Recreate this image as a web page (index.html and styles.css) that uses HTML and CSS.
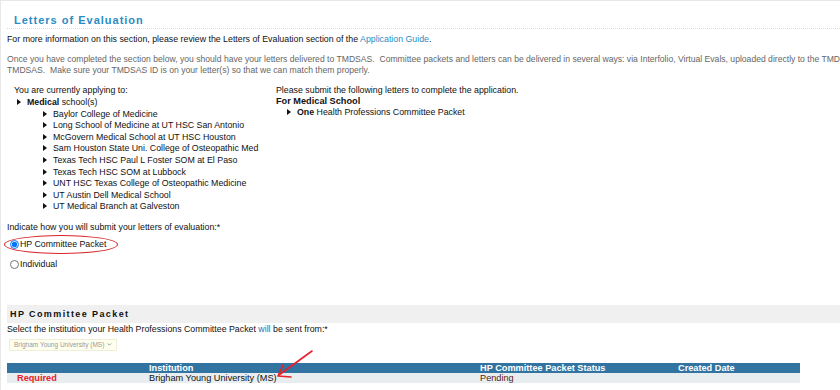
FILE: index.html
```html
<!DOCTYPE html>
<html lang="en">
<head>
  <meta charset="UTF-8">
  <title>Letters of Evaluation</title>
  <link rel="stylesheet" href="styles.css">
</head>
<body>
  <div id="page">
    <h2 class="title">Letters of Evaluation</h2>
    <p class="info">For more information on this section, please review the Letters of Evaluation section of the <a href="#">Application Guide</a>.</p>
    <p class="note">Once you have completed the section below, you should have your letters delivered to TMDSAS.&nbsp; Committee packets and letters can be delivered in several ways: via Interfolio, Virtual Evals, uploaded directly to the TMDSAS portal, or mailed to<br>TMDSAS.&nbsp; Make sure your TMDSAS ID is on your letter(s) so that we can match them properly.</p>

    <div class="cols">
      <div class="col-left">
        <div>You are currently applying to:</div>
        <ul class="tri top">
          <li><b>Medical</b> school(s)
            <ul class="tri sub">
              <li>Baylor College of Medicine</li>
              <li>Long School of Medicine at UT HSC San Antonio</li>
              <li>McGovern Medical School at UT HSC Houston</li>
              <li>Sam Houston State Uni. College of Osteopathic Med</li>
              <li>Texas Tech HSC Paul L Foster SOM at El Paso</li>
              <li>Texas Tech HSC SOM at Lubbock</li>
              <li>UNT HSC Texas College of Osteopathic Medicine</li>
              <li>UT Austin Dell Medical School</li>
              <li>UT Medical Branch at Galveston</li>
            </ul>
          </li>
        </ul>
      </div>
      <div class="col-right">
        <div>Please submit the following letters to complete the application.</div>
        <div class="for"><b>For Medical School</b></div>
        <ul class="tri req">
          <li><b>One</b> Health Professions Committee Packet</li>
        </ul>
      </div>
    </div>

    <div class="method">
      <div>Indicate how you will submit your letters of evaluation:*</div>
      <label class="opt circled"><input type="radio" name="m" checked> HP Committee Packet</label>
      <label class="opt second"><input type="radio" name="m"> Individual</label>
    </div>

    <h3 class="band">HP Committee Packet</h3>
    <div class="select-label">Select the institution your Health Professions Committee Packet <span class="will">will</span> be sent from:*</div>
    <div class="fake-select">Brigham Young University (MS) <svg class="chev" width="7" height="5" viewBox="0 0 7 5"><path d="M1 1 L3.5 3.5 L6 1" stroke="#888" stroke-width="1.2" fill="none"/></svg></div>

    <div class="table-wrap">
      <table class="packets">
        <tr>
          <th class="c1"></th>
          <th class="c2">Institution</th>
          <th class="c3">HP Committee Packet Status</th>
          <th class="c4">Created Date</th>
        </tr>
        <tr>
          <td class="c1 required">Required</td>
          <td class="c2">Brigham Young University (MS)</td>
          <td class="c3 pending">Pending</td>
          <td class="c4"></td>
        </tr>
      </table>
      <svg class="arrow" width="50" height="34" viewBox="0 0 50 34">
        <path d="M43 2 L10 26" stroke="#e8202a" stroke-width="1.6" fill="none" stroke-linecap="round"/>
        <path d="M14 16 L9 27 L22 28" stroke="#e8202a" stroke-width="1.6" fill="none" stroke-linecap="round" stroke-linejoin="round"/>
      </svg>
    </div>
  </div>
</body>
</html>
```

FILE: styles.css
```css
body { margin: 0; font-family: Arial, "Liberation Sans", sans-serif; font-size: 8.8px; line-height: 11px; color: #111; background: #fff; }
#page { border-top: 1px solid #e8e8e8; border-left: 1px solid #e8e8e8; padding: 0 0 0 6px; height: 389px; overflow: hidden; }
.title { margin: 0; padding: 13px 0 1px 7px; font-size: 11px; line-height: 13px; letter-spacing: 1px; color: #2b8cc4; border-bottom: 1px dotted #e2dcc6; }
.info { margin: 5px 0 0 0; }
.info a { color: #2b8cc4; text-decoration: none; }
.note { margin: 9px 0 0 0; color: #666; font-size: 8.6px; line-height: 10.5px; white-space: nowrap; }

.cols { display: flex; margin-top: 10px; }
.col-left { width: 262px; padding-left: 7px; }
.for { font-size: 9.2px; line-height: 10px; }

ul.tri { list-style: none; margin: 0; padding: 0; }
ul.tri li { position: relative; padding-left: 13px; line-height: 11.6px; }
ul.tri li::before { content: ""; position: absolute; left: 3px; top: 2px; border-left: 4px solid #111; border-top: 3px solid transparent; border-bottom: 3px solid transparent; }
ul.tri.top { margin-top: 1px; }
ul.tri.sub { padding-left: 13px; }
ul.tri.req { padding-left: 8px; margin-top: 1px; }

.method { margin-top: 9px; }
.opt { display: flex; align-items: center; gap: 1px; width: fit-content; height: 13px; }
.opt input { margin: 0 0 0 3px; width: 9px; height: 9px; }
.circled { position: relative; margin-top: 5px; }
.circled::after { content: ""; position: absolute; left: -3px; top: -3px; width: 112px; height: 17px; border: 1.5px solid #d9262a; border-radius: 50%; }
.second { margin-top: 7px; }

.band { margin: 34px 0 0 0; padding: 0 3px; height: 18px; line-height: 19px; background: #f0f0f0; font-size: 9px; letter-spacing: 1.4px; color: #111; }
.select-label { margin-top: 1px; }
.will { color: #2b6cb0; }
.fake-select { display: flex; align-items: center; gap: 3px; margin: 4px 0 0 2px; width: 98px; height: 10px; padding: 0 4px; font-size: 6.5px; color: #999; background: #fffff0; border: 1px solid #efefd8; white-space: nowrap; }

.table-wrap { position: relative; margin-top: 12px; }
.packets { border-collapse: collapse; width: 793px; }
.packets th { background: #3174a2; color: #fff; text-align: left; font-size: 9.2px; line-height: 10px; padding: 0; }
.packets td { background: #e8eef0; font-size: 9.2px; line-height: 10px; padding: 0; }
.packets .c1 { width: 132px; padding-left: 10px; }
.c2 { width: 331px; }
.c3 { width: 198px; }
.required { color: #e8202a; font-weight: bold; }
.pending { color: #5a1a12; }
.arrow { position: absolute; left: 262px; top: -14px; }
```
